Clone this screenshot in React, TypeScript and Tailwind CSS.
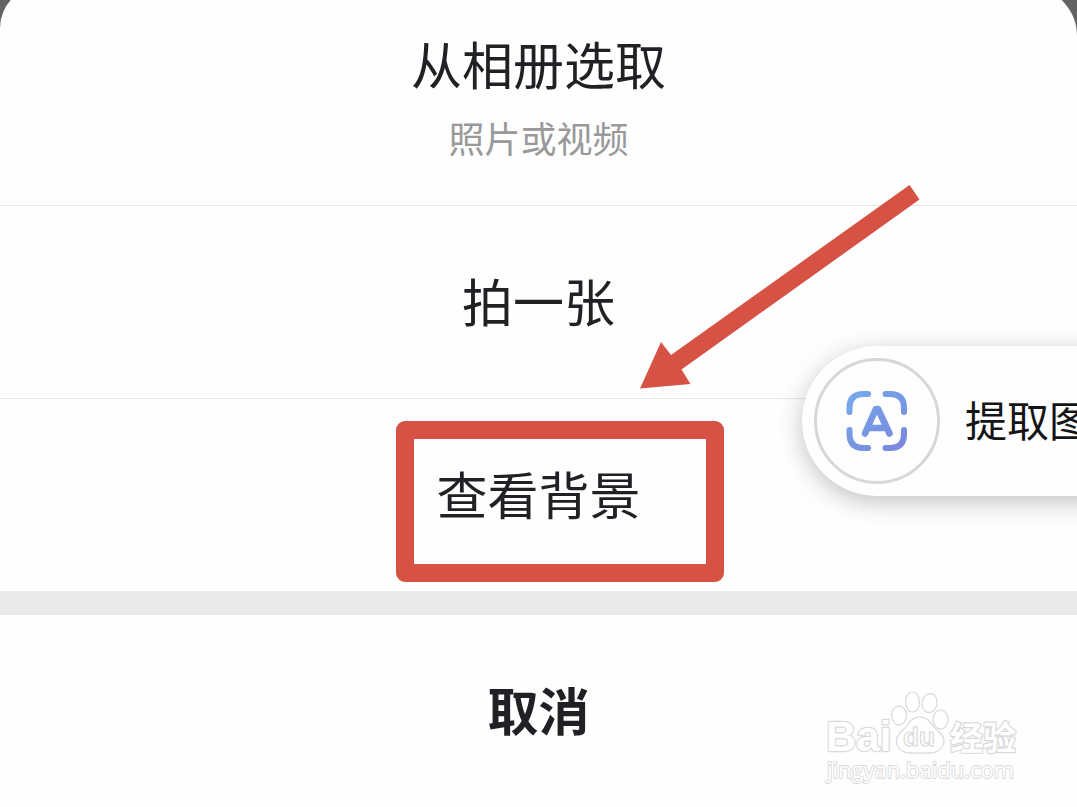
function ScanTextIcon() {
  return (
    <svg viewBox="0 0 62 62" className="size-[62px]" fill="none" aria-hidden="true">
      <defs>
        <linearGradient id="scan" x1="8" y1="0" x2="54" y2="62" gradientUnits="userSpaceOnUse">
          <stop offset="0" stopColor="#74a9ec" />
          <stop offset="1" stopColor="#7b86dc" />
        </linearGradient>
      </defs>
      <g stroke="url(#scan)" strokeWidth="6" strokeLinecap="round" strokeLinejoin="round">
        <path d="M3.500 22V18Q3.500 4 17.500 4H22" />
        <path d="M39.500 4H44Q58 4 58 18V22" />
        <path d="M58 40V44Q58 58 44 58H39.500" />
        <path d="M22 58H17.500Q3.500 58 3.500 44V40" />
        <path d="M19 43.500L29.800 19H32L43.500 43.500M24 38H39" strokeWidth="6.600" />
      </g>
    </svg>
  );
}

function Arrow() {
  return (
    <svg
      viewBox="0 0 280 204"
      className="pointer-events-none absolute top-[185px] left-1/2 ml-[101px] h-[204px] w-[280px]"
      aria-hidden="true"
    >
      <path d="M269.500 0L279.500 14.500L41.500 184.500L50.500 199L0 203.500L21 157L31 170Z" fill="#d65244" />
    </svg>
  );
}

function Watermark() {
  return (
    <svg
      viewBox="0 0 200 96"
      className="pointer-events-none absolute right-[54px] bottom-[21px] h-24 w-[200px]"
      fill="#fff"
      stroke="#d9d9d9"
      strokeWidth="1.200"
      role="img"
      aria-label="Baidu 经验"
    >
      <g strokeWidth="2.400" paintOrder="stroke" strokeLinejoin="round" fontWeight="700">
        <text x="3" y="61" fontSize="42" fontFamily="Liberation Sans, sans-serif">Bai</text>
        <text x="127" y="60" fontSize="33" fontFamily="Noto Sans CJK SC, sans-serif">经验</text>
      </g>
      <ellipse cx="76" cy="25.500" rx="7.500" ry="9.500" />
      <ellipse cx="89.500" cy="12" rx="7" ry="10" />
      <ellipse cx="106.500" cy="13" rx="7.500" ry="9.500" transform="rotate(12 106.500 13)" />
      <ellipse cx="117.500" cy="29.500" rx="7.500" ry="9.500" />
      <path d="M97 27C106 27 108 35 115 41C121 46 123 51 119 57C115 64 107 63 97 63S79 64 75 57C71 50 74 45 80 40C86 35 87 27 97 27Z" />
      <text x="80" y="56" fontSize="26" fontWeight="700" fontFamily="Liberation Sans, sans-serif">du</text>
      <text
        x="4"
        y="88"
        fontSize="22"
        strokeWidth="1.800"
        paintOrder="stroke"
        strokeLinejoin="round"
        fontFamily="Open Sans, sans-serif"
      >
        jingyan.baidu.com
      </text>
    </svg>
  );
}

export default function App() {
  return (
    <main className="relative flex min-h-screen flex-col overflow-hidden bg-[#636363] font-['Noto_Sans_CJK_SC',sans-serif] text-[#202124]">
      <div className="-mt-3.5 flex grow flex-col rounded-tl-[42px] rounded-tr-[50px] bg-[#fefefe] pt-3.5 text-[51px] leading-[60px]">
        <button className="flex h-[206px] flex-col items-center justify-center gap-5 border-b border-[#e6e6e6] pb-3">
          <span>从相册选取</span>
          <span className="text-[36px] leading-[48px] text-[#999]">照片或视频</span>
        </button>
        <button className="flex h-[193px] items-center justify-center border-b border-[#e6e6e6] pb-1">拍一张</button>
        <div className="relative flex h-48 flex-col">
          <button className="flex grow items-center justify-center pb-1">查看背景</button>
          <div className="pointer-events-none absolute top-[22px] left-1/2 -ml-[143px] h-[161px] w-[328px] rounded-[9px] border-[18px] border-[#d65244]" />
        </div>
        <div className="h-6 bg-[#e9e9e9]" />
        <button className="flex h-48 items-center justify-center pb-1 font-bold">取消</button>
      </div>

      <Arrow />

      <button className="absolute top-[346px] -right-10 flex h-[150px] w-[315px] items-center gap-[25px] rounded-l-full bg-[#fefefe] pl-3 text-[42px] leading-[60px] whitespace-nowrap text-[#151517] shadow-[0_6px_24px_rgba(0,0,0,0.24)]">
        <span className="flex size-[126px] shrink-0 items-center justify-center rounded-full border-[3px] border-[#d8d6d6]">
          <ScanTextIcon />
        </span>
        <span className="pb-1">提取图</span>
      </button>

      <Watermark />
    </main>
  );
}
